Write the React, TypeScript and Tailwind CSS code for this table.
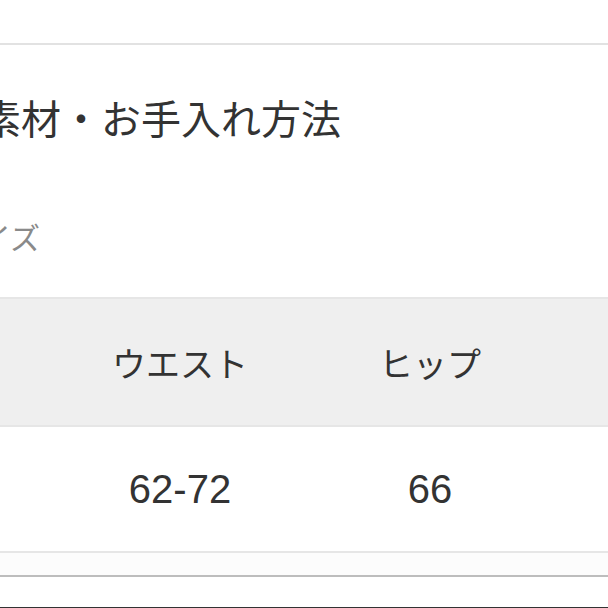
const jp = { fontFamily: '"Noto Sans CJK JP", "Noto Sans", sans-serif' };
const num = { fontFamily: '"Liberation Sans", Arial, sans-serif' };

export default function App() {
  return (
    <div className="w-[608px] h-[608px] overflow-hidden bg-white text-[#333]" style={jp}>
      <div className="h-[43px]" />
      <div className="h-[2px] bg-[#e2e2e2]" />

      <h2 className="mt-[50px] ml-[-19px] whitespace-nowrap text-[40px] leading-[44px] font-normal">
        素材・お手入れ方法
      </h2>
      <p className="mt-[79px] ml-[-49px] whitespace-nowrap text-[30px] leading-[36px] text-[#8a8a8a]">
        サイズ
      </p>

      <div className="mt-[43px]">
        {/* header */}
        <div className="flex h-[130px] items-center border-y-2 border-[#e6e6e6] bg-[#efefef] pl-[55px] text-[34px]">
          <div className="w-[250px] text-center">ウエスト</div>
          <div className="w-[250px] text-center">ヒップ</div>
        </div>
        {/* row */}
        <div className="flex h-[126px] items-center border-b-2 border-[#e6e6e6] pl-[55px] text-[40px]" style={num}>
          <div className="w-[250px] text-center">62-72</div>
          <div className="w-[250px] text-center">66</div>
        </div>
      </div>

      <div className="h-[22px] bg-[#fcfcfc]" />
      <div className="h-[2px] bg-[#bdbdbd]" />
      <div className="h-[30px]" />
      <div className="h-[1px] bg-[#333]" />
    </div>
  );
}
